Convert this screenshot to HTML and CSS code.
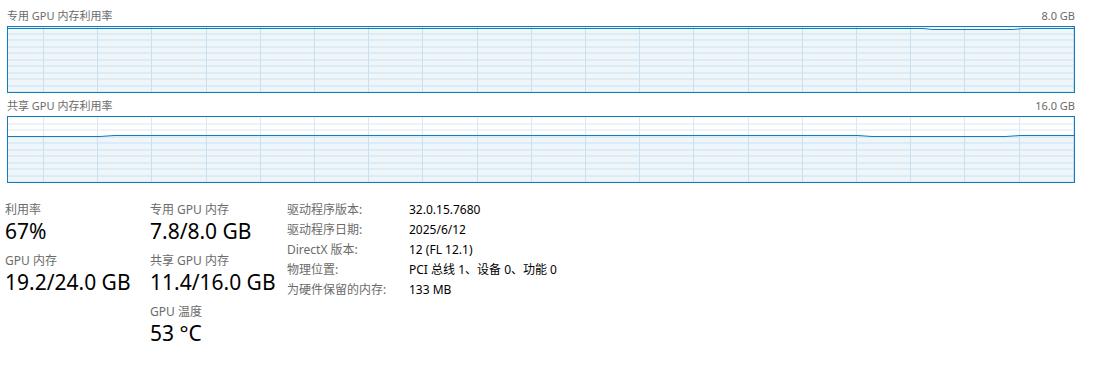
FILE: index.html
```html
<!DOCTYPE html>
<html lang="zh-CN">
<head>
    <meta charset="UTF-8">
    <title>GPU 性能</title>
    <link rel="stylesheet" href="styles.css">
</head>
<body>
    <div class="gpu-page">
        <div class="chart-block">
            <div class="chart-caption">
                <span>专用 GPU 内存利用率</span>
                <span>8.0 GB</span>
            </div>
            <div class="chart">
                <svg class="chart-plot" viewBox="0 0 1066 65" preserveAspectRatio="none">
                    <polygon class="area" points="0,1.5 915,1.5 925,2.5 1005,2.5 1015,1.5 1066,1.5 1066,65 0,65"></polygon>
                    <polyline class="line" points="0,1.5 915,1.5 925,2.5 1005,2.5 1015,1.5 1066,1.5"></polyline>
                </svg>
            </div>
        </div>

        <div class="chart-block">
            <div class="chart-caption">
                <span>共享 GPU 内存利用率</span>
                <span>16.0 GB</span>
            </div>
            <div class="chart">
                <svg class="chart-plot" viewBox="0 0 1066 65" preserveAspectRatio="none">
                    <polygon class="area" points="0,19.5 92,19.5 106,18.5 850,18.5 864,19.5 998,19.5 1012,18.5 1066,18.5 1066,65 0,65"></polygon>
                    <polyline class="line" points="0,19.5 92,19.5 106,18.5 850,18.5 864,19.5 998,19.5 1012,18.5 1066,18.5"></polyline>
                </svg>
            </div>
        </div>

        <div class="stats">
            <div class="stat-col col-usage">
                <div class="stat">
                    <div class="stat-label">利用率</div>
                    <div class="stat-value">67%</div>
                </div>
                <div class="stat">
                    <div class="stat-label">GPU 内存</div>
                    <div class="stat-value">19.2/24.0 GB</div>
                </div>
            </div>
            <div class="stat-col col-memory">
                <div class="stat">
                    <div class="stat-label">专用 GPU 内存</div>
                    <div class="stat-value">7.8/8.0 GB</div>
                </div>
                <div class="stat">
                    <div class="stat-label">共享 GPU 内存</div>
                    <div class="stat-value">11.4/16.0 GB</div>
                </div>
                <div class="stat">
                    <div class="stat-label">GPU 温度</div>
                    <div class="stat-value">53 °C</div>
                </div>
            </div>
            <dl class="details">
                <dt>驱动程序版本:</dt>
                <dd>32.0.15.7680</dd>
                <dt>驱动程序日期:</dt>
                <dd>2025/6/12</dd>
                <dt>DirectX 版本:</dt>
                <dd>12 (FL 12.1)</dd>
                <dt>物理位置:</dt>
                <dd>PCI 总线 1、设备 0、功能 0</dd>
                <dt>为硬件保留的内存:</dt>
                <dd>133 MB</dd>
            </dl>
        </div>
    </div>
</body>
</html>
```

FILE: styles.css
```css
* {
    margin: 0;
    padding: 0;
    box-sizing: border-box;
}

:root {
    --chart-blue: #117dbb;
    --grid-color: #d9e8f3;
    --label-color: #6b6b6b;
    --text-color: #000000;
}

body {
    background: #ffffff;
    font-family: "Noto Sans", "Noto Sans CJK SC", sans-serif;
    color: var(--text-color);
    width: 1097px;
    height: 370px;
    overflow: hidden;
}

.gpu-page {
    padding: 7px 22px 0 7px;
}

.chart-block {
    margin-bottom: 4px;
}

.chart-caption {
    display: flex;
    justify-content: space-between;
    font-size: 11px;
    line-height: 17px;
    height: 19px;
    color: var(--label-color);
}

.chart {
    height: 67px;
    border: 1px solid var(--chart-blue);
    background-color: #ffffff;
    background-image:
        repeating-linear-gradient(to right, var(--grid-color) 0 1px, transparent 1px 54.2px),
        repeating-linear-gradient(to bottom, var(--grid-color) 0 1px, transparent 1px 6.5px);
    background-position: 35px 0, 0 6.5px;
}

.chart-plot {
    display: block;
    width: 100%;
    height: 100%;
}

.chart-plot .area {
    fill: rgba(17, 125, 187, 0.07);
    stroke: none;
}

.chart-plot .line {
    fill: none;
    stroke: var(--chart-blue);
    stroke-width: 1;
}

.stats {
    display: flex;
    margin-top: 19px;
    margin-left: -2px;
}

.stat-col {
    display: flex;
    flex-direction: column;
    gap: 8px;
}

.col-usage {
    width: 145px;
}

.col-memory {
    width: 137px;
}

.stat-label {
    font-size: 12px;
    line-height: 16px;
    height: 16px;
    color: var(--label-color);
}

.stat-value {
    font-size: 21px;
    line-height: 27px;
    height: 27px;
}

.details {
    display: grid;
    grid-template-columns: 122px auto;
    grid-auto-rows: 20px;
    font-size: 12px;
    line-height: 20px;
    margin-top: -2px;
}

.details dt {
    color: var(--label-color);
}

.details dd {
    color: #000000;
}
```
